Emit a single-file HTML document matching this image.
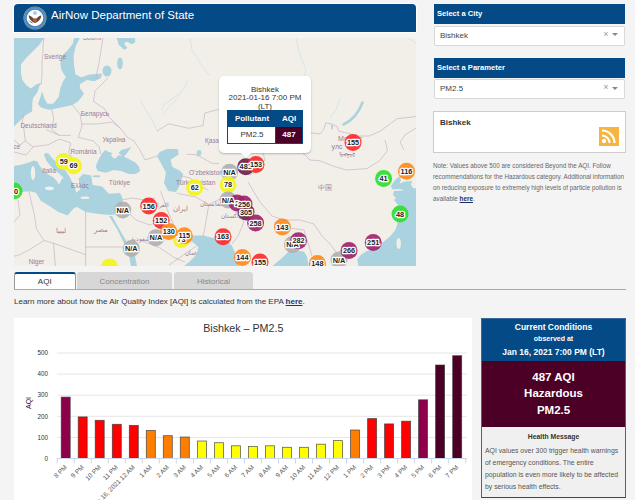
<!DOCTYPE html>
<html><head><meta charset="utf-8">
<style>
*{margin:0;padding:0;box-sizing:border-box}
html,body{width:635px;height:500px;overflow:hidden;background:#f4f4f4;font-family:"Liberation Sans",sans-serif;color:#333}
.a{position:absolute}
#hdr{left:14px;top:4px;width:402px;height:28px;background:#034a86;border-radius:4px 4px 0 0;box-shadow:0 0 0 1px #fff}
#hdr .t{left:37px;top:5.2px;color:#fff;font-size:11.5px;white-space:nowrap}
#map{left:14px;top:38px;width:402px;height:228px;overflow:hidden;background:#f2efe9}
.sh{background:#034a86;color:#fff;font-weight:bold;font-size:7.6px;padding-left:3px;line-height:20px;height:20px}
.sel{background:#fff;border:1px solid #d8d8d8;border-radius:2px;height:20px;font-size:8px;color:#444;padding-left:5px;line-height:18px}
.sel .x{position:absolute;right:15.5px;top:-2px;color:#999;font-size:9px}
.sel .c{position:absolute;right:6px;top:6.5px;width:0;height:0;border-left:3px solid transparent;border-right:3px solid transparent;border-top:3px solid #888}
.note{left:433px;top:160px;width:195px;font-size:6.3px;line-height:11px;color:#666}
.tab{top:272px;height:18px;font-size:8px;text-align:center;line-height:19.5px;color:#888;background:#d7d7d7;border-radius:3px 3px 0 0}
#learn{left:14px;top:296.5px;font-size:8px;color:#333;white-space:nowrap}
#chart{left:14px;top:318px;width:458px;height:182px;background:#fff}
#cc{left:481px;top:318px;width:145px;height:180px;border:1px solid #3a6a9c;border-bottom-color:#1d4d80;background:#f0f0f0}
</style></head><body>
<div id="hdr" class="a">
  <svg class="a" style="left:8.5px;top:2px" width="24" height="24" viewBox="0 0 24 24">
    <circle cx="12" cy="12" r="11.6" fill="#9aa070"/>
    <circle cx="12" cy="12" r="10.9" fill="#3f7fc4"/>
    <circle cx="12" cy="12" r="10" fill="none" stroke="#7aa6d6" stroke-width="0.6"/>
    <circle cx="12" cy="12" r="8.3" fill="#fff"/>
    <circle cx="12" cy="7" r="2.1" fill="#a9cfe6"/>
    <path d="M5.5 9.5 Q7 9 9 11 L11 13 L12 12 L13 13 L15 11 Q17 9 18.5 9.5 Q18 13 15.5 15 Q14 16.5 12 17 Q10 16.5 8.5 15 Q6 13 5.5 9.5Z" fill="#6b4a2b"/>
    <path d="M10.3 12.8 h3.4 v2.6 q-1.7 1.6 -3.4 0z" fill="#d24a4a"/>
    <path d="M6.5 15 q1.5 1.5 3 2" stroke="#5a8a4a" stroke-width="1" fill="none"/>
  </svg>
  <div class="a t">AirNow Department of State</div>
</div>
<div id="map" class="a"><svg class="a" style="left:0;top:0" width="402" height="228" viewBox="14 38 402 228">
<rect x="14" y="38" width="402" height="228" fill="#f2efe9"/>
<polygon points="14,38 44.1,38 39.2,45 32.2,52 25.2,59 21,64.6 21,73 22.4,80 26.6,85.6 30.8,88.4 36.4,84.2 40.6,82.8 37.5,92 33,98 32.2,104 32.2,111.2 25.2,115.4 19.6,121 14,126.6" fill="#aad3df" />
<polygon points="42,91.2 44.8,99.6 47.6,103.8 53.2,103.8 58.8,96.8 60.2,88.4 63,81.4 65.8,77.2 61.6,70.2 60.2,63.2 63,54.8 68.6,49.2 72.8,43.6 74.2,38 79.8,38 75.6,46.4 73.5,56.2 74.2,66 75.6,74.4 81.2,77.2 89.6,74.4 102,73.5 101,77.9 94.3,81.2 86.8,80 79.8,84.2 80,88 84,93.8 78.3,101.3 72.6,105.1 63.1,107 56,108.4 49,109.8 41,107.5 38,104 40.5,97" fill="#aad3df" />
<polygon points="116.4,38 135.1,38 135.1,42.6 131.8,44.3 126.3,41.5 124.1,43.7 127.4,48.1 124.1,49.8 118.6,44.8 117.5,40.4" fill="#aad3df" />
<ellipse cx="107" cy="71" rx="4.5" ry="5.5" fill="#aad3df"/>
<ellipse cx="120" cy="63.5" rx="2.8" ry="6" fill="#aad3df"/>
<polygon points="14,166 21.9,164.4 29.7,162.3 33.5,160.4 37.3,161.3 39.2,165.1 43.9,171.7 48.6,174.6 53.4,177.4 57.1,181.2 59,185 57.1,187.8 60.9,181.2 61.9,178.4 64.2,178.4 59,173.6 52.4,168 46.7,161.3 43.9,154.7 45.8,152.8 48.6,153.8 53.4,159.5 60.9,165.1 65.6,170.8 69.4,176.5 72.3,182.1 74.6,186.5 76.2,192.8 80.1,189.6 78.6,178.6 83.3,173.9 91.2,175.5 92.7,184.9 102.2,186.5 108.5,193.4 114,193.5 120,193 122.5,198 122,206 120.5,214 110,215 99,214 85.6,212 77,207 74,208 67.5,215.6 58.1,211.7 48.6,205.4 40.8,200.7 36,192.8 29.7,191.2 21.9,192 14,194.4" fill="#aad3df" />
<ellipse cx="33" cy="173" rx="2.2" ry="7" fill="#f2efe9"/>
<ellipse cx="49.5" cy="188.3" rx="4.5" ry="1.9" fill="#f2efe9"/>
<ellipse cx="85" cy="197.8" rx="4.5" ry="1.2" fill="#f2efe9"/>
<polygon points="105.1,150.1 108.9,152 112.7,153 110.8,154.8 113.6,158.6 116.5,157.7 118.4,155.3 122.1,155.8 118.4,153 121.2,150.1 127.8,148.2 131.6,146.8 127.8,152 124,156.7 129.7,159.6 135.4,162.4 139.1,167.1 140.1,170.9 136.3,173.8 129.7,174.2 121.2,170.9 113.6,170 106.1,172.8 97.6,170.9 95.7,166.2 98.5,159.6 101.3,154.8" fill="#aad3df" />
<ellipse cx="96.5" cy="176.2" rx="4" ry="1" fill="#aad3df"/>
<polygon points="167,149 177.8,149 178.7,154.4 170.6,159.8 172.4,167 179.6,170.6 183.2,174.2 181.4,179.6 180,185 176,192 168,191 164,183 166,173 162,165 157,156.2 159.8,152" fill="#aad3df" />
<polygon points="109,216 117,229 123,241 129,256 131,266 137,266 135,256 128,244 121,232 112,216" fill="#aad3df" />
<polygon points="157,222 170,226 182,233 190.4,235.5 192,241.8 185,240 176,238 165,234 158,228" fill="#aad3df" />
<polygon points="190.4,235.5 203,235.5 215.6,238.6 228.2,241.8 232,246 234.7,251.8 236.3,259.6 239.4,266 184,266 188.8,262.2 196.7,254.4 198.3,246.5 192,241.8" fill="#aad3df" />
<polygon points="272.5,266 282,258 288.3,251.8 296,250.2 304,251.8 307,256.5 308.7,266" fill="#aad3df" />
<polygon points="416,188.5 413,188 411,185 412,181 405,181.5 399.5,183.5 401,180 400,176 395,180 391,186 392,189.5 400,189 404,190.5 394,191 393,195 396,198 394,200 398,205 396,215 397.6,223.6 395.4,230 390.2,236.3 382.7,242.6 375.3,249 366.8,251.1 360.5,255.3 357.3,259.6 358.4,266 416,266" fill="#aad3df" />
<ellipse cx="398.7" cy="243.6" rx="2.2" ry="5.3" fill="#f2efe9"/>
<path d="M187.8 80.5 L184 88 L180.7 92.5 L172 99 L164 104.3 L161.8 110" stroke="#aad3df" stroke-width="0.6" fill="none" opacity="0.6"/>
<path d="M163 115 L168 108 L176 100 L180 94" stroke="#aad3df" stroke-width="0.6" fill="none" opacity="0.6"/>
<path d="M140 100 L146 110 L152 120 L158 132" stroke="#aad3df" stroke-width="0.6" fill="none" opacity="0.6"/>
<path d="M190 38 L192 50 L198 60 L205 70 L210 76" stroke="#aad3df" stroke-width="0.6" fill="none" opacity="0.6"/>
<path d="M296 38 L300 55 L306 70 L302 85" stroke="#aad3df" stroke-width="0.6" fill="none" opacity="0.6"/>
<path d="M409 38.4 L418 45" stroke="#aad3df" stroke-width="0.6" fill="none" opacity="0.6"/>
<path d="M330 118 L336 110 L340 98" stroke="#aad3df" stroke-width="0.6" fill="none" opacity="0.6"/>
<path d="M300 92 L305 100 L312 104" stroke="#aad3df" stroke-width="0.6" fill="none" opacity="0.6"/>
<ellipse cx="199" cy="153" rx="2.5" ry="3" fill="#aad3df" opacity="0.9"/>
<ellipse cx="332" cy="127" rx="1" ry="2.7" fill="#aad3df"/>
<path d="M362.5 102.5 Q357 118 343.5 124.5" stroke="#aad3df" stroke-width="2.6" fill="none" stroke-linecap="round"/>
<path d="M44 38 L43 45 L43 52 L42 62 L42 75 L41 85" stroke="#c4acc4" stroke-width="0.7" fill="none" opacity="0.9"/>
<path d="M51.8 108.9 L53.7 118.4 L51.8 129.7 L59.4 135.4" stroke="#c4acc4" stroke-width="0.7" fill="none" opacity="0.9"/>
<path d="M72.6 105.1 L80.2 114.6 L82 125.9 L78.3 137.3" stroke="#c4acc4" stroke-width="0.7" fill="none" opacity="0.9"/>
<path d="M95.3 90 L93.4 101.3 L104.7 108.9 L108.5 116.5" stroke="#c4acc4" stroke-width="0.7" fill="none" opacity="0.9"/>
<path d="M82 124 L97.2 124 L112.3 122.1 L119.9 127.8 L127.4 137.3 L134 141" stroke="#c4acc4" stroke-width="0.7" fill="none" opacity="0.9"/>
<path d="M108.5 116.5 L119.9 127.8" stroke="#c4acc4" stroke-width="0.7" fill="none" opacity="0.9"/>
<path d="M78.3 137.3 L93.4 141 L99 146.7 L101 154.3" stroke="#c4acc4" stroke-width="0.7" fill="none" opacity="0.9"/>
<path d="M70.7 142.9 L68.8 152.4 L74.5 161.8" stroke="#c4acc4" stroke-width="0.7" fill="none" opacity="0.9"/>
<path d="M23.5 125.9 L25.3 141 L32.9 146.7 L48 144.8 L59.4 139.1 L70.7 142.9" stroke="#c4acc4" stroke-width="0.7" fill="none" opacity="0.9"/>
<path d="M46.1 129.7 L59.4 135.4 L70.7 135.4" stroke="#c4acc4" stroke-width="0.7" fill="none" opacity="0.9"/>
<path d="M23.5 114.6 L21.6 125.9" stroke="#c4acc4" stroke-width="0.7" fill="none" opacity="0.9"/>
<path d="M14 140 L20 145 L25.3 141" stroke="#c4acc4" stroke-width="0.7" fill="none" opacity="0.9"/>
<path d="M14 152 L26 155 L33 147" stroke="#c4acc4" stroke-width="0.7" fill="none" opacity="0.9"/>
<path d="M103 38 L101 50 L99 63 L97 72 L96 79" stroke="#c4acc4" stroke-width="0.7" fill="none" opacity="0.9"/>
<path d="M96 90 L102 84 L108 78" stroke="#c4acc4" stroke-width="0.7" fill="none" opacity="0.9"/>
<path d="M134 141 L140 150 L145 160 L157 156" stroke="#c4acc4" stroke-width="0.7" fill="none" opacity="0.9"/>
<path d="M157 131 L168.8 123.8 L188.6 128.3 L203 125.6 L204.8 113 L219 109.4" stroke="#c4acc4" stroke-width="0.7" fill="none" opacity="0.9"/>
<path d="M186.8 154.4 L194 154.4 L199.4 156.2 L212 163.4 L219 163.4" stroke="#c4acc4" stroke-width="0.7" fill="none" opacity="0.9"/>
<path d="M182 176 L190 178 L200 186 L208 190" stroke="#c4acc4" stroke-width="0.7" fill="none" opacity="0.9"/>
<path d="M160.6 191.3 L169 214 L174.8 227.3" stroke="#c4acc4" stroke-width="0.7" fill="none" opacity="0.9"/>
<path d="M176.7 193.2 L195.6 197 L208.8 204.6 L205 227.3 L203 236.7" stroke="#c4acc4" stroke-width="0.7" fill="none" opacity="0.9"/>
<path d="M208.8 204.6 L218 200 L228 196 L236 198" stroke="#c4acc4" stroke-width="0.7" fill="none" opacity="0.9"/>
<path d="M234 210 L244 222 L238 236 L232 244" stroke="#c4acc4" stroke-width="0.7" fill="none" opacity="0.9"/>
<path d="M248 182 L260 202 L272 216 L284 220 L300 220 L314 224 L322 236" stroke="#c4acc4" stroke-width="0.7" fill="none" opacity="0.9"/>
<path d="M274 222 L290 228 L304 230" stroke="#c4acc4" stroke-width="0.7" fill="none" opacity="0.9"/>
<path d="M304 230 L312 256" stroke="#c4acc4" stroke-width="0.7" fill="none" opacity="0.9"/>
<path d="M322 236 L330 244 L336 252" stroke="#c4acc4" stroke-width="0.7" fill="none" opacity="0.9"/>
<path d="M320 160.8 L333 166 L346 170 L366.8 168.6 L379.7 160.8 L387.5 150.4 L385 140" stroke="#c4acc4" stroke-width="0.7" fill="none" opacity="0.9"/>
<path d="M311 132.9 L320 134 L323.8 129.5 L325.7 122.8 L331.3 123.8 L337 126.6 L338.9 131.3 L348.3 133.2 L357.8 136 L369 136 L380 131.3 L397 118.7 L416.3 116.5" stroke="#c4acc4" stroke-width="0.7" fill="none" opacity="0.9"/>
<path d="M300 140 L311 132.9" stroke="#c4acc4" stroke-width="0.7" fill="none" opacity="0.9"/>
<path d="M300 140 L302 152 L310 160 L320 160.8" stroke="#c4acc4" stroke-width="0.7" fill="none" opacity="0.9"/>
<path d="M262 128 L270 135 L285 138 L300 140" stroke="#c4acc4" stroke-width="0.7" fill="none" opacity="0.9"/>
<path d="M258 170 L265 160 L262 150 L262 128" stroke="#c4acc4" stroke-width="0.7" fill="none" opacity="0.9"/>
<path d="M240 170 L250 175 L258 170" stroke="#c4acc4" stroke-width="0.7" fill="none" opacity="0.9"/>
<path d="M122 200 L132 198 L145 200 L155 198" stroke="#c4acc4" stroke-width="0.7" fill="none" opacity="0.9"/>
<path d="M122 214 L128 212 L136 220 L150 225 L157 222" stroke="#c4acc4" stroke-width="0.7" fill="none" opacity="0.9"/>
<path d="M140 240 L160 248 L175 258 L185 262" stroke="#c4acc4" stroke-width="0.7" fill="none" opacity="0.9"/>
<path d="M169 265 L199.4 244" stroke="#c4acc4" stroke-width="0.7" fill="none" opacity="0.9"/>
<path d="M28.9 191.3 L34.6 216 L36.5 229 L44 240.5 L53.5 243.3 L85.6 254.7" stroke="#c4acc4" stroke-width="0.7" fill="none" opacity="0.9"/>
<path d="M14 256 L17.6 255.6 L28.9 250 L44 240.5" stroke="#c4acc4" stroke-width="0.7" fill="none" opacity="0.9"/>
<path d="M85.6 212 L85.6 266" stroke="#c4acc4" stroke-width="0.7" fill="none" opacity="0.9"/>
<path d="M85.6 247 L130 247" stroke="#c4acc4" stroke-width="0.7" fill="none" opacity="0.9"/>
<path d="M53.5 243.3 L55.4 266" stroke="#c4acc4" stroke-width="0.7" fill="none" opacity="0.9"/>
<path d="M18 200 L20 215 L14 222" stroke="#c4acc4" stroke-width="0.7" fill="none" opacity="0.9"/>
<path d="M416 128 L405 135 L400 142 L404 150" stroke="#c4acc4" stroke-width="0.7" fill="none" opacity="0.9"/>
<text x="92" y="40" text-anchor="middle" font-size="6.5" fill="#8a6a8a" opacity="0.85">Suomi</text>
<text x="55" y="58.5" text-anchor="middle" font-size="6.5" fill="#8a6a8a" opacity="0.85">Sverige</text>
<text x="38.5" y="128" text-anchor="middle" font-size="6.5" fill="#8a6a8a" opacity="0.85">Deutschland</text>
<text x="95" y="115.5" text-anchor="middle" font-size="6.5" fill="#8a6a8a" opacity="0.85">Беларусь</text>
<text x="114" y="142" text-anchor="middle" font-size="6.5" fill="#8a6a8a" opacity="0.85">Україна</text>
<text x="83.5" y="154" text-anchor="middle" font-size="6.5" fill="#8a6a8a" opacity="0.85">România</text>
<text x="49" y="172.5" text-anchor="middle" font-size="6.5" fill="#8a6a8a" opacity="0.85">Italia</text>
<text x="79.8" y="188" text-anchor="middle" font-size="6.5" fill="#8a6a8a" opacity="0.85">Ελλάς</text>
<text x="119.5" y="185" text-anchor="middle" font-size="6.5" fill="#8a6a8a" opacity="0.85">Türkiye</text>
<text x="206" y="175" text-anchor="middle" font-size="6.5" fill="#8a6a8a" opacity="0.85">O'zbekiston</text>
<text x="195.6" y="185" text-anchor="middle" font-size="6.5" fill="#8a6a8a" opacity="0.85">Türkmenistan</text>
<text x="212" y="143" text-anchor="middle" font-size="6.5" fill="#8a6a8a" opacity="0.85">Қаза</text>
<text x="350" y="140.5" text-anchor="middle" font-size="7" fill="#8a6a8a" opacity="0.85">Монгол</text>
<text x="337" y="149" text-anchor="middle" font-size="7" fill="#8a6a8a" opacity="0.85">улс</text>
<text x="347" y="157" text-anchor="middle" font-size="5" fill="#8a6a8a" opacity="0.85">ᠮᠣᠩᠭᠣᠯ</text>
<text x="324.5" y="189.5" text-anchor="middle" font-size="6.5" fill="#8a6a8a" opacity="0.85">中国</text>
<text x="61" y="233" text-anchor="middle" font-size="6.5" fill="#8a6a8a" opacity="0.85">ليبيا</text>
<text x="100.5" y="232" text-anchor="middle" font-size="6.5" fill="#8a6a8a" opacity="0.85">مصر</text>
<text x="36.5" y="264" text-anchor="middle" font-size="6.5" fill="#8a6a8a" opacity="0.85">Niger</text>
<text x="180" y="211" text-anchor="middle" font-size="6.5" fill="#8a6a8a" opacity="0.85">ایران</text>
<text x="142" y="240.5" text-anchor="middle" font-size="6" fill="#8a6a8a" opacity="0.85">السعودية</text>
<text x="191" y="254.5" text-anchor="middle" font-size="6" fill="#8a6a8a" opacity="0.85">عمان</text>
<text x="231" y="218" text-anchor="middle" font-size="6" fill="#8a6a8a" opacity="0.85">پاکستان</text>
<text x="212" y="205.5" text-anchor="middle" font-size="6" fill="#8a6a8a" opacity="0.85">افغانستان</text>
<text x="17" y="149" text-anchor="middle" font-size="6.5" fill="#8a6a8a" opacity="0.85">ce</text>
<text x="160" y="207" text-anchor="middle" font-size="6" fill="#8a6a8a" opacity="0.85">العراق</text>
<circle cx="14" cy="191" r="8.5" fill="#2ee02e" opacity="0.92"/>
<circle cx="63.7" cy="161.6" r="8.5" fill="#f4f419" opacity="0.92"/>
<circle cx="73.5" cy="165.8" r="8.5" fill="#f4f419" opacity="0.92"/>
<circle cx="109.5" cy="267" r="8.5" fill="#f4f419" opacity="0.92"/>
<circle cx="122.8" cy="210" r="8.5" fill="#b0b0b0" opacity="0.92"/>
<circle cx="148.7" cy="206" r="8.5" fill="#ff2a2a" opacity="0.92"/>
<circle cx="161.2" cy="220.6" r="8.5" fill="#ff2a2a" opacity="0.92"/>
<circle cx="155.9" cy="237.7" r="8.5" fill="#b0b0b0" opacity="0.92"/>
<circle cx="131.3" cy="248.4" r="8.5" fill="#b0b0b0" opacity="0.92"/>
<circle cx="181.4" cy="239.5" r="8.5" fill="#f4f419" opacity="0.92"/>
<circle cx="168.8" cy="231.4" r="8.5" fill="#ff8a1a" opacity="0.92"/>
<circle cx="184.3" cy="235.8" r="8.5" fill="#ff8a1a" opacity="0.92"/>
<circle cx="194.7" cy="187.6" r="8.5" fill="#f4f419" opacity="0.92"/>
<circle cx="229.6" cy="172.3" r="8.5" fill="#b0b0b0" opacity="0.92"/>
<circle cx="228" cy="184.7" r="8.5" fill="#f4f419" opacity="0.92"/>
<circle cx="245.7" cy="166.8" r="8.5" fill="#6e2248" opacity="0.92"/>
<circle cx="256" cy="164.4" r="8.5" fill="#ff2a2a" opacity="0.92"/>
<circle cx="228" cy="200" r="8.5" fill="#b0b0b0" opacity="0.92"/>
<circle cx="237" cy="203" r="8.5" fill="#a3236a" opacity="0.92"/>
<circle cx="244" cy="204" r="8.5" fill="#a3236a" opacity="0.92"/>
<circle cx="246" cy="212" r="8.5" fill="#6e2248" opacity="0.92"/>
<circle cx="255.6" cy="223" r="8.5" fill="#a3236a" opacity="0.92"/>
<circle cx="282.4" cy="227" r="8.5" fill="#ff8a1a" opacity="0.92"/>
<circle cx="223" cy="236.7" r="8.5" fill="#ff2a2a" opacity="0.92"/>
<circle cx="242.4" cy="257.5" r="8.5" fill="#ff8a1a" opacity="0.92"/>
<circle cx="260" cy="262" r="8.5" fill="#ff2a2a" opacity="0.92"/>
<circle cx="292.5" cy="244.5" r="8.5" fill="#b0b0b0" opacity="0.92"/>
<circle cx="298.5" cy="240.7" r="8.5" fill="#a3236a" opacity="0.92"/>
<circle cx="317.4" cy="263.6" r="8.5" fill="#ff8a1a" opacity="0.92"/>
<circle cx="339" cy="260" r="8.5" fill="#b0b0b0" opacity="0.92"/>
<circle cx="349" cy="250.4" r="8.5" fill="#a3236a" opacity="0.92"/>
<circle cx="373.2" cy="242.6" r="8.5" fill="#a3236a" opacity="0.92"/>
<circle cx="400" cy="214" r="8.5" fill="#2ee02e" opacity="0.92"/>
<circle cx="383.6" cy="178.4" r="8.5" fill="#2ee02e" opacity="0.92"/>
<circle cx="406.5" cy="171.2" r="8.5" fill="#ff8a1a" opacity="0.92"/>
<circle cx="353" cy="142.5" r="8.5" fill="#ff2a2a" opacity="0.92"/>
<text x="14" y="193.5" text-anchor="middle" font-size="7.3" font-weight="bold" fill="#222" stroke="#fff" stroke-width="2.7" paint-order="stroke" stroke-linejoin="round">40</text>
<text x="63.7" y="164.1" text-anchor="middle" font-size="7.3" font-weight="bold" fill="#222" stroke="#fff" stroke-width="2.7" paint-order="stroke" stroke-linejoin="round">59</text>
<text x="73.5" y="168.3" text-anchor="middle" font-size="7.3" font-weight="bold" fill="#222" stroke="#fff" stroke-width="2.7" paint-order="stroke" stroke-linejoin="round">69</text>
<text x="122.8" y="212.5" text-anchor="middle" font-size="7.3" font-weight="bold" fill="#222" stroke="#fff" stroke-width="2.7" paint-order="stroke" stroke-linejoin="round">N/A</text>
<text x="148.7" y="208.5" text-anchor="middle" font-size="7.3" font-weight="bold" fill="#222" stroke="#fff" stroke-width="2.7" paint-order="stroke" stroke-linejoin="round">156</text>
<text x="161.2" y="223.1" text-anchor="middle" font-size="7.3" font-weight="bold" fill="#222" stroke="#fff" stroke-width="2.7" paint-order="stroke" stroke-linejoin="round">152</text>
<text x="155.9" y="240.2" text-anchor="middle" font-size="7.3" font-weight="bold" fill="#222" stroke="#fff" stroke-width="2.7" paint-order="stroke" stroke-linejoin="round">N/A</text>
<text x="131.3" y="250.9" text-anchor="middle" font-size="7.3" font-weight="bold" fill="#222" stroke="#fff" stroke-width="2.7" paint-order="stroke" stroke-linejoin="round">N/A</text>
<text x="181.4" y="242.0" text-anchor="middle" font-size="7.3" font-weight="bold" fill="#222" stroke="#fff" stroke-width="2.7" paint-order="stroke" stroke-linejoin="round">73</text>
<text x="168.8" y="233.9" text-anchor="middle" font-size="7.3" font-weight="bold" fill="#222" stroke="#fff" stroke-width="2.7" paint-order="stroke" stroke-linejoin="round">130</text>
<text x="184.3" y="238.3" text-anchor="middle" font-size="7.3" font-weight="bold" fill="#222" stroke="#fff" stroke-width="2.7" paint-order="stroke" stroke-linejoin="round">115</text>
<text x="194.7" y="190.1" text-anchor="middle" font-size="7.3" font-weight="bold" fill="#222" stroke="#fff" stroke-width="2.7" paint-order="stroke" stroke-linejoin="round">62</text>
<text x="229.6" y="174.8" text-anchor="middle" font-size="7.3" font-weight="bold" fill="#222" stroke="#fff" stroke-width="2.7" paint-order="stroke" stroke-linejoin="round">N/A</text>
<text x="228" y="187.2" text-anchor="middle" font-size="7.3" font-weight="bold" fill="#222" stroke="#fff" stroke-width="2.7" paint-order="stroke" stroke-linejoin="round">78</text>
<text x="245.7" y="169.3" text-anchor="middle" font-size="7.3" font-weight="bold" fill="#222" stroke="#fff" stroke-width="2.7" paint-order="stroke" stroke-linejoin="round">481</text>
<text x="256" y="166.9" text-anchor="middle" font-size="7.3" font-weight="bold" fill="#222" stroke="#fff" stroke-width="2.7" paint-order="stroke" stroke-linejoin="round">153</text>
<text x="228" y="202.5" text-anchor="middle" font-size="7.3" font-weight="bold" fill="#222" stroke="#fff" stroke-width="2.7" paint-order="stroke" stroke-linejoin="round">N/A</text>
<text x="237" y="205.5" text-anchor="middle" font-size="7.3" font-weight="bold" fill="#222" stroke="#fff" stroke-width="2.7" paint-order="stroke" stroke-linejoin="round">2</text>
<text x="244" y="206.5" text-anchor="middle" font-size="7.3" font-weight="bold" fill="#222" stroke="#fff" stroke-width="2.7" paint-order="stroke" stroke-linejoin="round">256</text>
<text x="246" y="214.5" text-anchor="middle" font-size="7.3" font-weight="bold" fill="#222" stroke="#fff" stroke-width="2.7" paint-order="stroke" stroke-linejoin="round">305</text>
<text x="255.6" y="225.5" text-anchor="middle" font-size="7.3" font-weight="bold" fill="#222" stroke="#fff" stroke-width="2.7" paint-order="stroke" stroke-linejoin="round">258</text>
<text x="282.4" y="229.5" text-anchor="middle" font-size="7.3" font-weight="bold" fill="#222" stroke="#fff" stroke-width="2.7" paint-order="stroke" stroke-linejoin="round">143</text>
<text x="223" y="239.2" text-anchor="middle" font-size="7.3" font-weight="bold" fill="#222" stroke="#fff" stroke-width="2.7" paint-order="stroke" stroke-linejoin="round">163</text>
<text x="242.4" y="260.0" text-anchor="middle" font-size="7.3" font-weight="bold" fill="#222" stroke="#fff" stroke-width="2.7" paint-order="stroke" stroke-linejoin="round">144</text>
<text x="260" y="264.5" text-anchor="middle" font-size="7.3" font-weight="bold" fill="#222" stroke="#fff" stroke-width="2.7" paint-order="stroke" stroke-linejoin="round">155</text>
<text x="292.5" y="247.0" text-anchor="middle" font-size="7.3" font-weight="bold" fill="#222" stroke="#fff" stroke-width="2.7" paint-order="stroke" stroke-linejoin="round">N/A</text>
<text x="298.5" y="243.2" text-anchor="middle" font-size="7.3" font-weight="bold" fill="#222" stroke="#fff" stroke-width="2.7" paint-order="stroke" stroke-linejoin="round">282</text>
<text x="317.4" y="266.1" text-anchor="middle" font-size="7.3" font-weight="bold" fill="#222" stroke="#fff" stroke-width="2.7" paint-order="stroke" stroke-linejoin="round">148</text>
<text x="339" y="262.5" text-anchor="middle" font-size="7.3" font-weight="bold" fill="#222" stroke="#fff" stroke-width="2.7" paint-order="stroke" stroke-linejoin="round">N/A</text>
<text x="349" y="252.9" text-anchor="middle" font-size="7.3" font-weight="bold" fill="#222" stroke="#fff" stroke-width="2.7" paint-order="stroke" stroke-linejoin="round">266</text>
<text x="373.2" y="245.1" text-anchor="middle" font-size="7.3" font-weight="bold" fill="#222" stroke="#fff" stroke-width="2.7" paint-order="stroke" stroke-linejoin="round">251</text>
<text x="400" y="216.5" text-anchor="middle" font-size="7.3" font-weight="bold" fill="#222" stroke="#fff" stroke-width="2.7" paint-order="stroke" stroke-linejoin="round">48</text>
<text x="383.6" y="180.9" text-anchor="middle" font-size="7.3" font-weight="bold" fill="#222" stroke="#fff" stroke-width="2.7" paint-order="stroke" stroke-linejoin="round">41</text>
<text x="406.5" y="173.7" text-anchor="middle" font-size="7.3" font-weight="bold" fill="#222" stroke="#fff" stroke-width="2.7" paint-order="stroke" stroke-linejoin="round">116</text>
<text x="353" y="145.0" text-anchor="middle" font-size="7.3" font-weight="bold" fill="#222" stroke="#fff" stroke-width="2.7" paint-order="stroke" stroke-linejoin="round">155</text>
</svg></div>
<div class="a" style="left:219px;top:75.8px;width:92px;height:77px;background:#fff;border-radius:5px;box-shadow:0 1px 2px rgba(0,0,0,0.25)"></div>
<svg class="a" style="left:238px;top:151px" width="16" height="9" viewBox="0 0 16 9"><path d="M1.5 1 L8 7.5 L14.5 1 Z" fill="#fff" stroke="rgba(0,0,0,0.12)" stroke-width="0.8"/><rect x="0" y="0" width="16" height="2" fill="#fff"/></svg>
<div class="a" style="left:219px;top:85.5px;width:92px;text-align:center;font-size:8px;line-height:8.6px;color:#333">Bishkek<br>2021-01-16 7:00 PM<br>(LT)</div>
<div class="a" style="left:227px;top:110px;width:76px;height:34px;border:1px solid #034a86;background:#fff">
  <div class="a" style="left:0;top:0;width:74px;height:16px;background:#034a86"></div>
  <div class="a" style="left:0;top:3px;width:48px;text-align:center;color:#fff;font-weight:bold;font-size:8px">Pollutant</div>
  <div class="a" style="left:48px;top:3px;width:26px;text-align:center;color:#fff;font-weight:bold;font-size:8px">AQI</div>
  <div class="a" style="left:47px;top:16px;width:27px;height:16px;background:#4c0026;border-left:1px solid #034a86"></div>
  <div class="a" style="left:0;top:19px;width:48px;text-align:center;color:#333;font-size:8px">PM2.5</div>
  <div class="a" style="left:48px;top:19px;width:26px;text-align:center;color:#fff;font-weight:bold;font-size:8px">487</div>
</div>

<!-- right panel -->
<div class="a sh" style="left:434px;top:4px;width:191px">Select a City</div>
<div class="a sel" style="left:434px;top:25.5px;width:191px">Bishkek<span class="x">×</span><span class="c"></span></div>
<div class="a sh" style="left:434px;top:58px;width:191px">Select a Parameter</div>
<div class="a sel" style="left:434px;top:79px;width:191px">PM2.5<span class="x">×</span><span class="c"></span></div>
<div class="a" style="left:433px;top:111px;width:193px;height:42px;background:#fff;border:1px solid #ccc">
  <div class="a" style="left:6px;top:6px;font-size:8px;font-weight:bold;color:#333">Bishkek</div>
  <svg class="a" style="left:165px;top:15px" width="20" height="19" viewBox="0 0 20 19">
    <rect width="20" height="19" fill="#f6b440"/>
    <circle cx="5" cy="14" r="2.2" fill="#fff"/>
    <path d="M3 8.5 A7.5 7.5 0 0 1 10.5 16" stroke="#fff" stroke-width="2.2" fill="none"/>
    <path d="M3 3.5 A12.5 12.5 0 0 1 15.5 16" stroke="#fff" stroke-width="2.2" fill="none"/>
  </svg>
</div>
<div class="a note">Note: Values above 500 are considered Beyond the AQI. Follow recommendations for the Hazardous category. Additional information on reducing exposure to extremely high levels of particle pollution is available <b style="text-decoration:underline;color:#1a2f5a">here</b>.</div>

<!-- tabs -->
<div class="a tab" style="left:14px;width:61.5px;background:#fff;color:#333;border:1px solid #999;border-top:2px solid #034a86;border-bottom:none;line-height:16px">AQI</div>
<div class="a tab" style="left:77px;width:95px">Concentration</div>
<div class="a tab" style="left:174px;width:79px">Historical</div>
<div class="a" style="left:14px;top:289px;width:612px;height:1px;background:#aaa"></div>
<div id="learn" class="a">Learn more about how the Air Quality Index [AQI] is calculated from the EPA <span style="text-decoration:underline;color:#1a3a7a;font-weight:bold">here</span>.</div>

<div id="chart" class="a"></div>
<svg class="a" style="left:14px;top:318px" width="458" height="182" viewBox="14 318 458 182">
<text x="243.3" y="332" text-anchor="middle" font-size="10.7" fill="#333">Bishkek – PM2.5</text>
<rect x="57" y="436.9" width="410" height="1" fill="#e6e6e6"/>
<rect x="57" y="415.8" width="410" height="1" fill="#e6e6e6"/>
<rect x="57" y="394.7" width="410" height="1" fill="#e6e6e6"/>
<rect x="57" y="373.6" width="410" height="1" fill="#e6e6e6"/>
<rect x="57" y="352.5" width="410" height="1" fill="#e6e6e6"/>
<text x="48" y="460.7" text-anchor="end" font-size="6.3" fill="#333">0</text>
<text x="48" y="439.6" text-anchor="end" font-size="6.3" fill="#333">100</text>
<text x="48" y="418.5" text-anchor="end" font-size="6.3" fill="#333">200</text>
<text x="48" y="397.4" text-anchor="end" font-size="6.3" fill="#333">300</text>
<text x="48" y="376.3" text-anchor="end" font-size="6.3" fill="#333">400</text>
<text x="48" y="355.2" text-anchor="end" font-size="6.3" fill="#333">500</text>
<text transform="translate(31,403) rotate(-90)" text-anchor="middle" font-size="7" fill="#222">AQI</text>
<rect x="61.2" y="397.1" width="9" height="61.4" fill="#8f004b" stroke="#333" stroke-width="0.8" stroke-opacity="0.75"/>
<rect x="78.2" y="416.9" width="9" height="41.6" fill="#ff0000" stroke="#333" stroke-width="0.8" stroke-opacity="0.75"/>
<rect x="95.2" y="420.3" width="9" height="38.2" fill="#ff0000" stroke="#333" stroke-width="0.8" stroke-opacity="0.75"/>
<rect x="112.3" y="424.3" width="9" height="34.2" fill="#ff0000" stroke="#333" stroke-width="0.8" stroke-opacity="0.75"/>
<rect x="129.3" y="425.4" width="9" height="33.1" fill="#ff0000" stroke="#333" stroke-width="0.8" stroke-opacity="0.75"/>
<rect x="146.3" y="430.4" width="9" height="28.1" fill="#ff7e00" stroke="#333" stroke-width="0.8" stroke-opacity="0.75"/>
<rect x="163.3" y="435.7" width="9" height="22.8" fill="#ff7e00" stroke="#333" stroke-width="0.8" stroke-opacity="0.75"/>
<rect x="180.3" y="437.0" width="9" height="21.5" fill="#ff7e00" stroke="#333" stroke-width="0.8" stroke-opacity="0.75"/>
<rect x="197.4" y="441.0" width="9" height="17.5" fill="#ffff00" stroke="#333" stroke-width="0.8" stroke-opacity="0.75"/>
<rect x="214.4" y="442.7" width="9" height="15.8" fill="#ffff00" stroke="#333" stroke-width="0.8" stroke-opacity="0.75"/>
<rect x="231.4" y="445.8" width="9" height="12.7" fill="#ffff00" stroke="#333" stroke-width="0.8" stroke-opacity="0.75"/>
<rect x="248.4" y="446.5" width="9" height="12.0" fill="#ffff00" stroke="#333" stroke-width="0.8" stroke-opacity="0.75"/>
<rect x="265.4" y="445.8" width="9" height="12.7" fill="#ffff00" stroke="#333" stroke-width="0.8" stroke-opacity="0.75"/>
<rect x="282.5" y="447.3" width="9" height="11.2" fill="#ffff00" stroke="#333" stroke-width="0.8" stroke-opacity="0.75"/>
<rect x="299.5" y="447.3" width="9" height="11.2" fill="#ffff00" stroke="#333" stroke-width="0.8" stroke-opacity="0.75"/>
<rect x="316.5" y="444.2" width="9" height="14.3" fill="#ffff00" stroke="#333" stroke-width="0.8" stroke-opacity="0.75"/>
<rect x="333.5" y="440.6" width="9" height="17.9" fill="#ffff00" stroke="#333" stroke-width="0.8" stroke-opacity="0.75"/>
<rect x="350.5" y="430.0" width="9" height="28.5" fill="#ff7e00" stroke="#333" stroke-width="0.8" stroke-opacity="0.75"/>
<rect x="367.6" y="418.6" width="9" height="39.9" fill="#ff0000" stroke="#333" stroke-width="0.8" stroke-opacity="0.75"/>
<rect x="384.6" y="423.9" width="9" height="34.6" fill="#ff0000" stroke="#333" stroke-width="0.8" stroke-opacity="0.75"/>
<rect x="401.6" y="421.2" width="9" height="37.3" fill="#ff0000" stroke="#333" stroke-width="0.8" stroke-opacity="0.75"/>
<rect x="418.6" y="399.8" width="9" height="58.7" fill="#8f004b" stroke="#333" stroke-width="0.8" stroke-opacity="0.75"/>
<rect x="435.6" y="365.0" width="9" height="93.5" fill="#4c0026" stroke="#333" stroke-width="0.8" stroke-opacity="0.75"/>
<rect x="452.7" y="355.7" width="9" height="102.8" fill="#4c0026" stroke="#333" stroke-width="0.8" stroke-opacity="0.75"/>
<rect x="57" y="458.0" width="410" height="1" fill="#ccd6eb"/>
<rect x="56.7" y="458.5" width="1" height="5" fill="#ccd6eb"/>
<rect x="73.7" y="458.5" width="1" height="5" fill="#ccd6eb"/>
<rect x="90.7" y="458.5" width="1" height="5" fill="#ccd6eb"/>
<rect x="107.8" y="458.5" width="1" height="5" fill="#ccd6eb"/>
<rect x="124.8" y="458.5" width="1" height="5" fill="#ccd6eb"/>
<rect x="141.8" y="458.5" width="1" height="5" fill="#ccd6eb"/>
<rect x="158.8" y="458.5" width="1" height="5" fill="#ccd6eb"/>
<rect x="175.8" y="458.5" width="1" height="5" fill="#ccd6eb"/>
<rect x="192.9" y="458.5" width="1" height="5" fill="#ccd6eb"/>
<rect x="209.9" y="458.5" width="1" height="5" fill="#ccd6eb"/>
<rect x="226.9" y="458.5" width="1" height="5" fill="#ccd6eb"/>
<rect x="243.9" y="458.5" width="1" height="5" fill="#ccd6eb"/>
<rect x="260.9" y="458.5" width="1" height="5" fill="#ccd6eb"/>
<rect x="278.0" y="458.5" width="1" height="5" fill="#ccd6eb"/>
<rect x="295.0" y="458.5" width="1" height="5" fill="#ccd6eb"/>
<rect x="312.0" y="458.5" width="1" height="5" fill="#ccd6eb"/>
<rect x="329.0" y="458.5" width="1" height="5" fill="#ccd6eb"/>
<rect x="346.0" y="458.5" width="1" height="5" fill="#ccd6eb"/>
<rect x="363.1" y="458.5" width="1" height="5" fill="#ccd6eb"/>
<rect x="380.1" y="458.5" width="1" height="5" fill="#ccd6eb"/>
<rect x="397.1" y="458.5" width="1" height="5" fill="#ccd6eb"/>
<rect x="414.1" y="458.5" width="1" height="5" fill="#ccd6eb"/>
<rect x="431.1" y="458.5" width="1" height="5" fill="#ccd6eb"/>
<rect x="448.2" y="458.5" width="1" height="5" fill="#ccd6eb"/>
<rect x="465.2" y="458.5" width="1" height="5" fill="#ccd6eb"/>
<text transform="translate(67.3,467.6) rotate(-45)" text-anchor="end" font-size="6.5" fill="#555">8 PM</text>
<text transform="translate(84.3,467.6) rotate(-45)" text-anchor="end" font-size="6.5" fill="#555">9 PM</text>
<text transform="translate(101.3,467.6) rotate(-45)" text-anchor="end" font-size="6.5" fill="#555">10 PM</text>
<text transform="translate(118.4,467.6) rotate(-45)" text-anchor="end" font-size="6.5" fill="#555">11 PM</text>
<text transform="translate(135.4,467.6) rotate(-45)" text-anchor="end" font-size="6.5" fill="#555">Jan 16, 2021 12 AM</text>
<text transform="translate(152.4,467.6) rotate(-45)" text-anchor="end" font-size="6.5" fill="#555">1 AM</text>
<text transform="translate(169.4,467.6) rotate(-45)" text-anchor="end" font-size="6.5" fill="#555">2 AM</text>
<text transform="translate(186.4,467.6) rotate(-45)" text-anchor="end" font-size="6.5" fill="#555">3 AM</text>
<text transform="translate(203.5,467.6) rotate(-45)" text-anchor="end" font-size="6.5" fill="#555">4 AM</text>
<text transform="translate(220.5,467.6) rotate(-45)" text-anchor="end" font-size="6.5" fill="#555">5 AM</text>
<text transform="translate(237.5,467.6) rotate(-45)" text-anchor="end" font-size="6.5" fill="#555">6 AM</text>
<text transform="translate(254.5,467.6) rotate(-45)" text-anchor="end" font-size="6.5" fill="#555">7 AM</text>
<text transform="translate(271.6,467.6) rotate(-45)" text-anchor="end" font-size="6.5" fill="#555">8 AM</text>
<text transform="translate(288.6,467.6) rotate(-45)" text-anchor="end" font-size="6.5" fill="#555">9 AM</text>
<text transform="translate(305.6,467.6) rotate(-45)" text-anchor="end" font-size="6.5" fill="#555">10 AM</text>
<text transform="translate(322.6,467.6) rotate(-45)" text-anchor="end" font-size="6.5" fill="#555">11 AM</text>
<text transform="translate(339.6,467.6) rotate(-45)" text-anchor="end" font-size="6.5" fill="#555">12 PM</text>
<text transform="translate(356.6,467.6) rotate(-45)" text-anchor="end" font-size="6.5" fill="#555">1 PM</text>
<text transform="translate(373.7,467.6) rotate(-45)" text-anchor="end" font-size="6.5" fill="#555">2 PM</text>
<text transform="translate(390.7,467.6) rotate(-45)" text-anchor="end" font-size="6.5" fill="#555">3 PM</text>
<text transform="translate(407.7,467.6) rotate(-45)" text-anchor="end" font-size="6.5" fill="#555">4 PM</text>
<text transform="translate(424.7,467.6) rotate(-45)" text-anchor="end" font-size="6.5" fill="#555">5 PM</text>
<text transform="translate(441.8,467.6) rotate(-45)" text-anchor="end" font-size="6.5" fill="#555">6 PM</text>
<text transform="translate(458.8,467.6) rotate(-45)" text-anchor="end" font-size="6.5" fill="#555">7 PM</text>
</svg>
<div id="cc" class="a">
  <div class="a" style="left:0;top:0;width:143px;height:42px;background:#034a86;color:#fff;font-weight:bold;text-align:center">
    <div class="a" style="left:0;width:143px;top:3px;font-size:8.5px">Current Conditions</div>
    <div class="a" style="left:0;width:143px;top:16px;font-size:7px">observed at</div>
    <div class="a" style="left:0;width:143px;top:28px;font-size:8.5px">Jan 16, 2021 7:00 PM (LT)</div>
  </div>
  <div class="a" style="left:0;top:42px;width:143px;height:66px;background:#4c0026;color:#fff;font-weight:bold;text-align:center;font-size:11.5px;line-height:16.3px;padding-top:8px">487 AQI<br>Hazardous<br>PM2.5</div>
  <div class="a" style="left:0;top:113.7px;width:143px;text-align:center;font-weight:bold;font-size:6.8px;color:#333">Health Message</div>
  <div class="a" style="left:3px;top:126px;width:140px;font-size:6.85px;line-height:12px;color:#555">AQI values over 300 trigger health warnings of emergency conditions. The entire population is even more likely to be affected by serious health effects.</div>
</div>
</body></html>
